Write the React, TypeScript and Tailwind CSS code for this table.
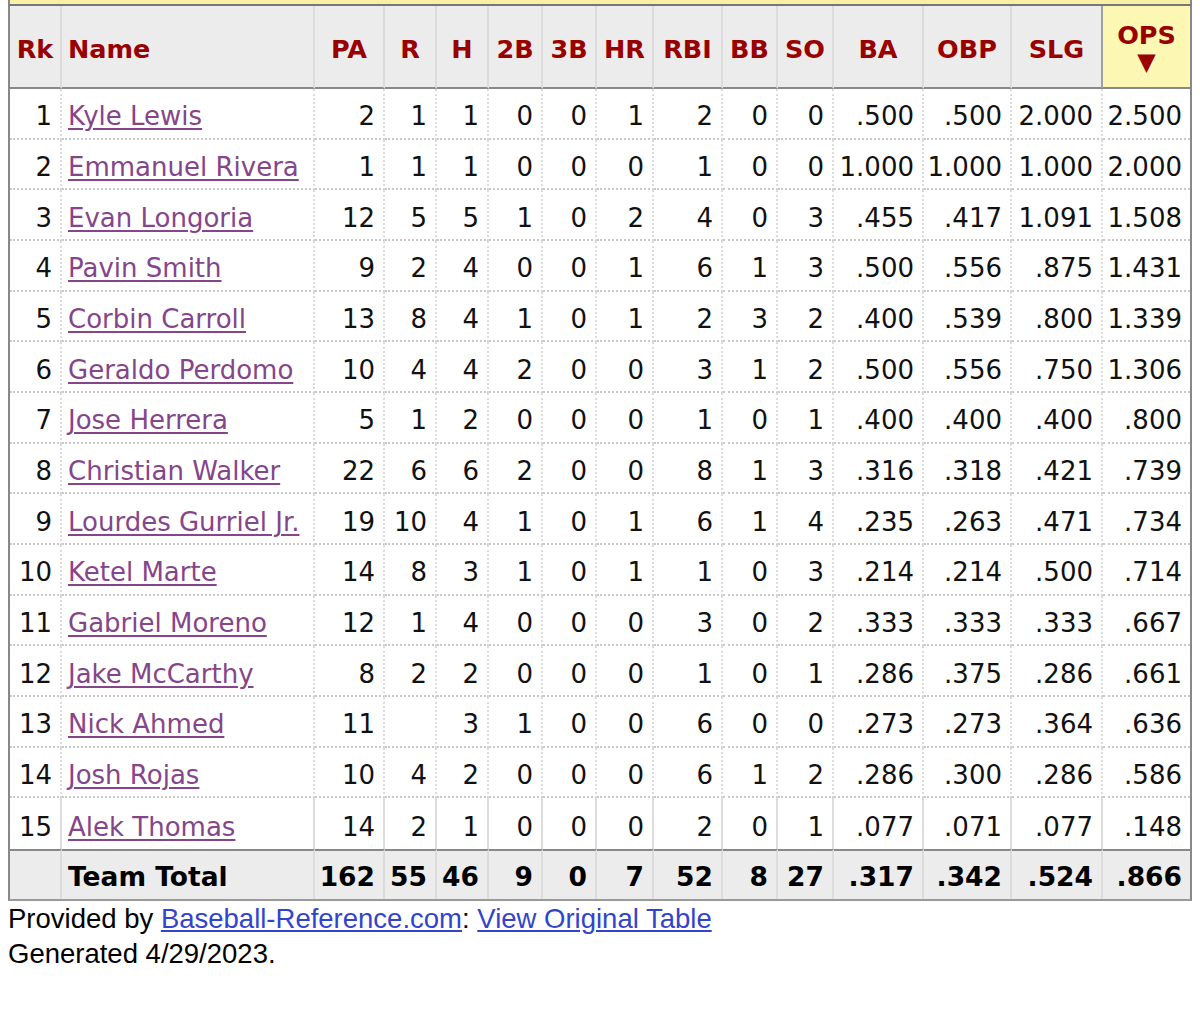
import React from "react";

const cols: { key: string; w: string; align: "left" | "center" }[] = [
  { key: "Rk", w: "w-[52px]", align: "center" },
  { key: "Name", w: "w-[253px]", align: "left" },
  { key: "PA", w: "w-[70px]", align: "center" },
  { key: "R", w: "w-[52px]", align: "center" },
  { key: "H", w: "w-[52px]", align: "center" },
  { key: "2B", w: "w-[54px]", align: "center" },
  { key: "3B", w: "w-[54px]", align: "center" },
  { key: "HR", w: "w-[57px]", align: "center" },
  { key: "RBI", w: "w-[69px]", align: "center" },
  { key: "BB", w: "w-[55px]", align: "center" },
  { key: "SO", w: "w-[56px]", align: "center" },
  { key: "BA", w: "w-[90px]", align: "center" },
  { key: "OBP", w: "w-[88px]", align: "center" },
  { key: "SLG", w: "w-[91px]", align: "center" },
  { key: "OPS", w: "w-[87px]", align: "center" },
];

const players: (string | number)[][] = [
  [1, "Kyle Lewis", 2, 1, 1, 0, 0, 1, 2, 0, 0, ".500", ".500", "2.000", "2.500"],
  [2, "Emmanuel Rivera", 1, 1, 1, 0, 0, 0, 1, 0, 0, "1.000", "1.000", "1.000", "2.000"],
  [3, "Evan Longoria", 12, 5, 5, 1, 0, 2, 4, 0, 3, ".455", ".417", "1.091", "1.508"],
  [4, "Pavin Smith", 9, 2, 4, 0, 0, 1, 6, 1, 3, ".500", ".556", ".875", "1.431"],
  [5, "Corbin Carroll", 13, 8, 4, 1, 0, 1, 2, 3, 2, ".400", ".539", ".800", "1.339"],
  [6, "Geraldo Perdomo", 10, 4, 4, 2, 0, 0, 3, 1, 2, ".500", ".556", ".750", "1.306"],
  [7, "Jose Herrera", 5, 1, 2, 0, 0, 0, 1, 0, 1, ".400", ".400", ".400", ".800"],
  [8, "Christian Walker", 22, 6, 6, 2, 0, 0, 8, 1, 3, ".316", ".318", ".421", ".739"],
  [9, "Lourdes Gurriel Jr.", 19, 10, 4, 1, 0, 1, 6, 1, 4, ".235", ".263", ".471", ".734"],
  [10, "Ketel Marte", 14, 8, 3, 1, 0, 1, 1, 0, 3, ".214", ".214", ".500", ".714"],
  [11, "Gabriel Moreno", 12, 1, 4, 0, 0, 0, 3, 0, 2, ".333", ".333", ".333", ".667"],
  [12, "Jake McCarthy", 8, 2, 2, 0, 0, 0, 1, 0, 1, ".286", ".375", ".286", ".661"],
  [13, "Nick Ahmed", 11, "", 3, 1, 0, 0, 6, 0, 0, ".273", ".273", ".364", ".636"],
  [14, "Josh Rojas", 10, 4, 2, 0, 0, 0, 6, 1, 2, ".286", ".300", ".286", ".586"],
  [15, "Alek Thomas", 14, 2, 1, 0, 0, 0, 2, 0, 1, ".077", ".071", ".077", ".148"],
];

const totals = ["", "Team Total", 162, 55, 46, 9, 0, 7, 52, 8, 27, ".317", ".342", ".524", ".866"];

export default function App() {
  return (
    <div className="bg-white min-h-[1011px] font-['DejaVu_Sans',Verdana,sans-serif]">
      <div className="ml-2 w-[1184px] h-[4px] bg-[#f8f0a4] border-x-2 border-[#888]" />
      <table className="ml-2 w-[1184px] table-fixed border-separate border-spacing-0 border-x-2 border-t-2 border-b-2 border-l-[#888] border-r-[#888] border-t-[#777] border-b-[#999]">
        <thead>
          <tr className="h-[83px]">
            {cols.map((c, i) => (
              <th
                key={c.key}
                className={`${c.w} px-1 pt-[5px] text-[25.5px] leading-[27px] font-bold text-[#990000] border-b-2 border-b-[#888] ${
                  c.align === "left" ? "text-left pl-[6px]" : "text-center"
                } ${c.key === "OPS" ? "bg-[#fcf7b2]" : "bg-[#ececec]"} ${
                  i < cols.length - 1 ? "border-r-2" : ""
                } ${c.key === "SLG" ? "border-r-[#a0a0a0]" : "border-r-[#dcdcdc]"}`}
              >
                {c.key === "OPS" ? (
                  <div className="flex flex-col items-center">
                    <span>OPS</span>
                    <span className="text-[24px] leading-[27px]">▼</span>
                  </div>
                ) : (
                  c.key
                )}
              </th>
            ))}
          </tr>
        </thead>
        <tbody>
          {players.map((row, r) => (
            <tr key={r} className="h-[50.67px]">
              {row.map((v, i) => (
                <td
                  key={i}
                  className={`pt-[6px] text-[26px] leading-[30px] text-[#111] ${
                    i === 1 ? "text-left pl-[6px]" : "text-right pr-2"
                  } ${i < row.length - 1 ? "border-r-2 border-r-[#dcdcdc]" : ""} ${
                    r < players.length - 1 ? "border-b-2 border-dotted border-b-[#c8c8c8]" : ""
                  }`}
                >
                  {i === 1 ? (
                    <a href="#" className="text-[#85458a] underline underline-offset-[3px] decoration-2">
                      {v}
                    </a>
                  ) : (
                    v
                  )}
                </td>
              ))}
            </tr>
          ))}
        </tbody>
        <tfoot>
          <tr className="h-[50px]">
            {totals.map((v, i) => (
              <td
                key={i}
                className={`pt-[5px] bg-[#ececec] text-[26.5px] leading-[30px] font-bold text-black border-t-2 border-t-[#888] ${
                  i === 1 ? "text-left pl-[6px]" : "text-right pr-2"
                } ${i < totals.length - 1 ? "border-r-2 border-r-[#dcdcdc]" : ""}`}
              >
                {v}
              </td>
            ))}
          </tr>
        </tfoot>
      </table>
      <div className="pl-2 font-['Liberation_Sans',Arial,sans-serif] text-[27.5px] leading-[35px] text-black">
        <div>
          Provided by{" "}
          <a href="#" className="text-[#3344cc] underline">
            Baseball-Reference.com
          </a>
          :{" "}
          <a href="#" className="text-[#3344cc] underline">
            View Original Table
          </a>
        </div>
        <div>Generated 4/29/2023.</div>
      </div>
    </div>
  );
}
